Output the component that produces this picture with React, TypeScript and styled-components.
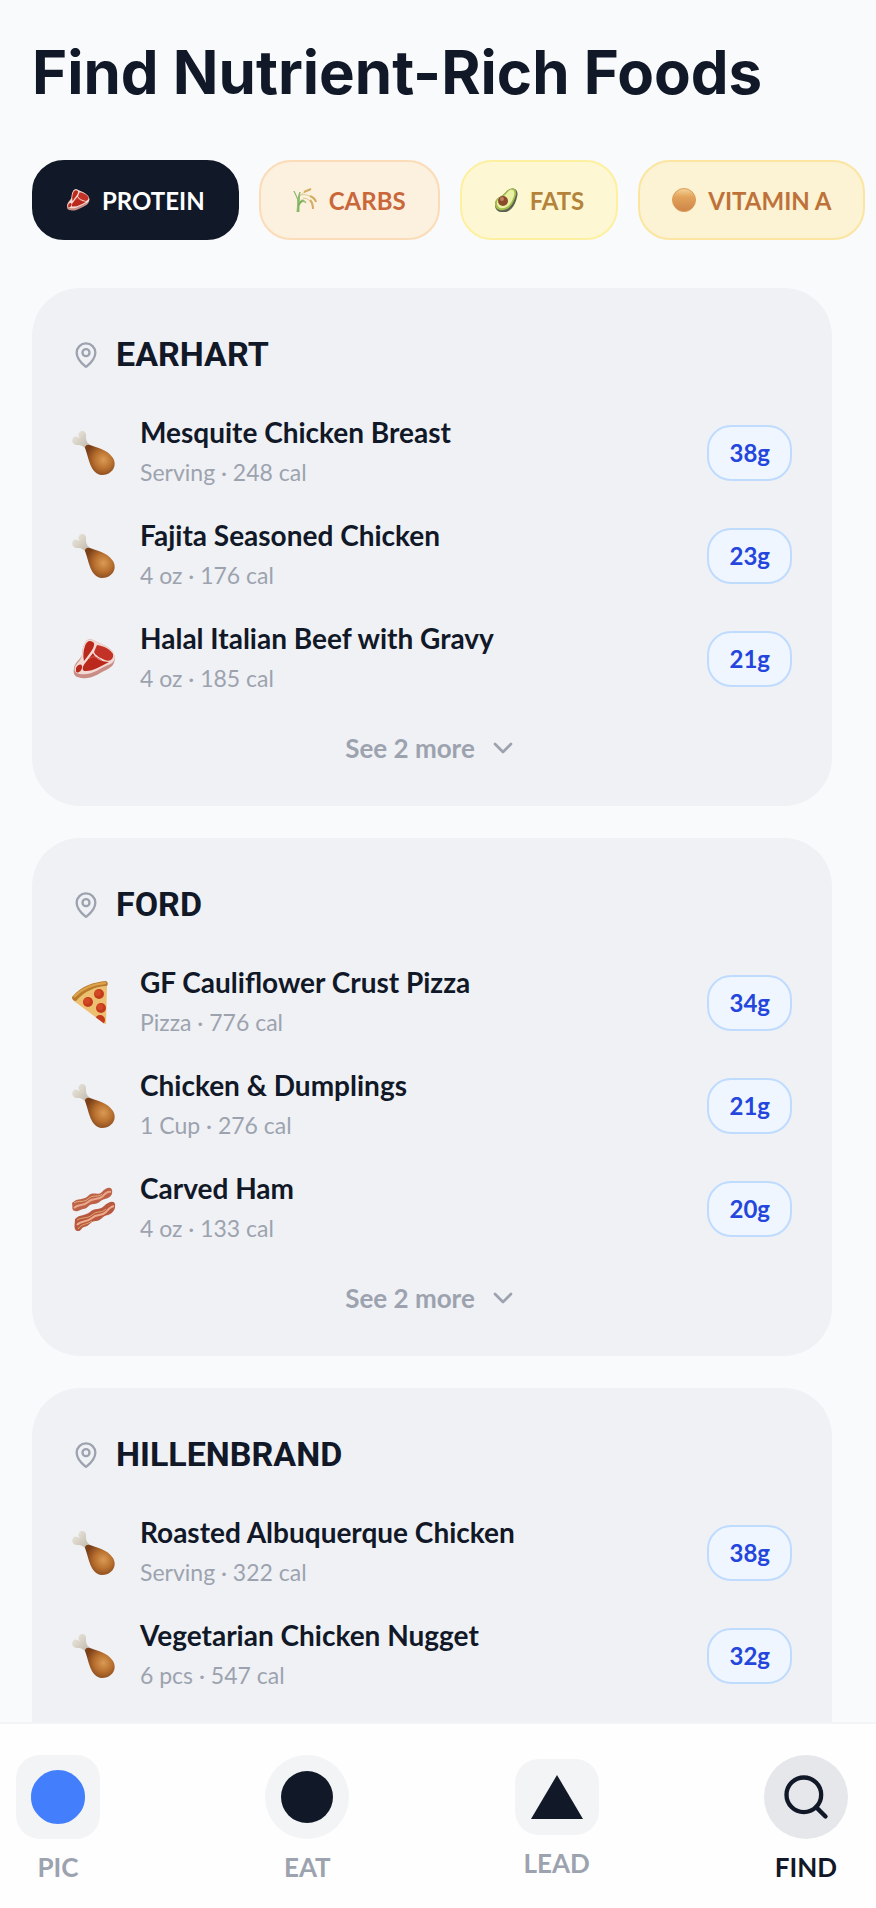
import React from 'react';
import styled, { createGlobalStyle, css } from 'styled-components';
import { ChevronDown, MapPin, Search } from 'lucide-react';

type FoodIcon = 'drumstick' | 'steak' | 'pizza' | 'bacon';
type NutrientTone = 'active' | 'orange' | 'yellow' | 'amber';
type NavShape = 'square' | 'circle' | 'wide';

interface Food {
  name: string;
  info: string;
  amount: string;
  icon: FoodIcon;
}

interface Hall {
  name: string;
  foods: Food[];
  hidden: number;
}

const halls: Hall[] = [
  {
    name: 'EARHART',
    hidden: 2,
    foods: [
      { name: 'Mesquite Chicken Breast', info: 'Serving · 248 cal', amount: '38g', icon: 'drumstick' },
      { name: 'Fajita Seasoned Chicken', info: '4 oz · 176 cal', amount: '23g', icon: 'drumstick' },
      { name: 'Halal Italian Beef with Gravy', info: '4 oz · 185 cal', amount: '21g', icon: 'steak' },
    ],
  },
  {
    name: 'FORD',
    hidden: 2,
    foods: [
      { name: 'GF Cauliflower Crust Pizza', info: 'Pizza · 776 cal', amount: '34g', icon: 'pizza' },
      { name: 'Chicken & Dumplings', info: '1 Cup · 276 cal', amount: '21g', icon: 'drumstick' },
      { name: 'Carved Ham', info: '4 oz · 133 cal', amount: '20g', icon: 'bacon' },
    ],
  },
  {
    name: 'HILLENBRAND',
    hidden: 0,
    foods: [
      { name: 'Roasted Albuquerque Chicken', info: 'Serving · 322 cal', amount: '38g', icon: 'drumstick' },
      { name: 'Vegetarian Chicken Nugget', info: '6 pcs · 547 cal', amount: '32g', icon: 'drumstick' },
    ],
  },
];

const Drumstick: React.FC = () => (
  <svg viewBox="0 0 44 44" aria-hidden="true">
    <defs>
      <radialGradient id="meat" cx="0.62" cy="0.5" r="0.6">
        <stop offset="0" stopColor="#d99a55" />
        <stop offset="0.5" stopColor="#b9702f" />
        <stop offset="1" stopColor="#7c4019" />
      </radialGradient>
      <linearGradient id="bone" x1="0" y1="0" x2="1" y2="1">
        <stop offset="0" stopColor="#efebe2" />
        <stop offset="1" stopColor="#bdb5a7" />
      </linearGradient>
    </defs>
    <path d="M7 2C9-2 14 0 14 4C14 8 14 11 18 14L14 18C10 14 8 14 5 14C1 14-1 10 1 7C3 4 5 6 8 7C6 5 6 4 7 2Z" fill="url(#bone)" />
    <path d="M13 16Q14 13 18 14C25 17 35 18 41 27C46 36 39 44 30 44C18 43 17 27 13 17Z" fill="url(#meat)" />
  </svg>
);

const Steak: React.FC = () => (
  <svg viewBox="0 0 44 44" aria-hidden="true">
    <path d="M12 8C14 2 18 1 23 4C28 7 35 8 40 14C45 20 43 29 36 32C29 35 20 43 9 41C2 40 1 37 2 31C3 25 8 23 10 18C11 14 10 12 12 8Z" fill="#c98d86" />
    <path d="M12 8C14 2 18 1 23 4C28 7 35 8 40 14C45 20 43 26 36 28C28 31 20 39 8 37C1 36 2 31 4 28C8 23 9 22 10 18C11 14 10 12 12 8Z" fill="#f2d9d4" />
    <path d="M13 9C15 3 19 3 22 6C23 11 17 17 12 24C11 20 11 14 13 9Z" fill="#bb291c" />
    <path d="M25 8C32 9 38 12 41 17C42 22 38 25 33 23C28 21 23 18 22 15Z" fill="#c23226" />
    <path d="M21 16C23 21 29 25 37 25C29 29 20 35 12 34C9 32 12 27 14 25Z" fill="#bb291c" />
    <path d="M4 31C7 26 11 27 10 31C9 36 3 37 4 33Z" fill="#b8291d" />
    <path d="M17 22C21 18 25 20 30 24" fill="none" stroke="#d9584b" strokeWidth="1" />
  </svg>
);

const Pizza: React.FC = () => (
  <svg viewBox="0 0 44 44" aria-hidden="true">
    <defs>
      <clipPath id="slice">
        <path d="M3 18Q16 6 35 5L34 43Q32 43 30 41L2 20Z" />
      </clipPath>
    </defs>
    <path d="M3 18Q16 6 35 5L34 43Q32 43 30 41L2 20Z" fill="#edc071" />
    <g clipPath="url(#slice)">
      <circle cx="27" cy="13" r="5" fill="#c43a1c" />
      <circle cx="16" cy="21" r="5" fill="#c43a1c" />
      <circle cx="29" cy="27" r="5" fill="#c43a1c" />
      <circle cx="28" cy="39" r="5" fill="#c43a1c" />
      <circle cx="26" cy="12" r="3" fill="#d34925" />
      <circle cx="15" cy="20" r="3" fill="#d34925" />
      <circle cx="28" cy="26" r="3" fill="#d34925" />
    </g>
    <path d="M0 16C9 5 22 1 34 0Q37 2 35 5C22 6 13 10 4 20Q0 20 0 16Z" fill="#b97a2a" />
    <path d="M2 16C11 6 22 3 34 2" fill="none" stroke="#dda34c" strokeWidth="2" />
  </svg>
);

const Bacon: React.FC = () => (
  <svg viewBox="0 0 44 44" aria-hidden="true">
    <path d="M0 16C6 10 11 14 16 9C20 4 26 9 30 5C33 1 39-1 40 3C41 8 38 11 33 12C28 13 27 17 22 17C16 17 16 22 11 22C7 23 6 25 3 24C-1 23 1 20 0 16Z" fill="#bd6248" />
    <path d="M2 21C7 16 11 20 16 15C21 10 26 14 31 9Q35 4 39 5" fill="none" stroke="#eba98c" strokeWidth="2" />
    <path d="M2 16C7 13 11 16 16 12C21 7 26 11 30 7" fill="none" stroke="#e0b07a" strokeWidth="1" />
    <path d="M3 32C8 27 13 29 18 25C23 20 27 24 32 19C36 15 42 13 43 17C44 23 40 27 36 28C30 29 29 34 24 34C18 34 18 39 12 40C9 41 9 45 5 44C1 42 3 37 3 32Z" fill="#b85840" />
    <path d="M5 38C9 33 14 36 20 31C25 26 29 30 34 25Q38 20 42 19" fill="none" stroke="#efac8d" strokeWidth="2" />
    <path d="M6 42C10 36 15 38 20 34M5 33C10 30 15 32 20 28C25 23 29 27 34 22" fill="none" stroke="#dfaa70" strokeWidth="1" />
  </svg>
);

const Wheat: React.FC = () => (
  <svg viewBox="0 0 24 24" aria-hidden="true">
    <path d="M4 24L5 12L1 3C3 8 5 10 5 14C5 9 6 6 7 4L6 15C8 11 11 11 13 15C10 12 8 14 6 18V24Z" fill="#78ae55" stroke="#8fbc70" strokeWidth="1" />
    <path d="M7 8C10 4 14 3 18 1M8 7C14 5 21 10 23 14M10 10Q18 10 20 20" fill="none" stroke="#e2c88f" strokeWidth="1" />
    <path d="M11 4L18 1M17 8Q22 10 23 14M17 12Q20 15 20 21" fill="none" stroke="#d4ad62" strokeWidth="2" />
  </svg>
);

const Avocado: React.FC = () => (
  <svg viewBox="0 0 24 24" aria-hidden="true">
    <path d="M16 1C21-1 25 3 23 9C22 14 19 22 12 24C6 25 1 23 1 17C1 9 8 9 11 5Q13 2 16 1Z" fill="#5b6350" />
    <path d="M16 1C20-1 23 2 22 7C20 13 17 21 10 22C5 23 1 21 1 16C1 9 8 9 11 5Q13 2 16 1Z" fill="#a5bd4d" />
    <path d="M16 2C20 1 21 4 20 8C18 14 15 19 10 20C6 21 3 19 3 15C3 10 9 10 12 6Q14 3 16 2Z" fill="#eaf0a6" />
    <circle cx="9" cy="13" r="5" fill="#8a4b2c" />
    <circle cx="8" cy="11" r="2" fill="#bd8060" />
  </svg>
);

const OrangeDot: React.FC = () => (
  <svg viewBox="0 0 24 24" aria-hidden="true">
    <defs>
      <linearGradient id="dot" x1="0" y1="0" x2="0" y2="1">
        <stop offset="0" stopColor="#f5d49b" />
        <stop offset="0.35" stopColor="#e3a45b" />
        <stop offset="1" stopColor="#cd8448" />
      </linearGradient>
    </defs>
    <circle cx="12" cy="12" r="11.5" fill="url(#dot)" stroke="#dc9c58" />
  </svg>
);

const foodIcons: Record<FoodIcon, React.FC> = {
  drumstick: Drumstick,
  steak: Steak,
  pizza: Pizza,
  bacon: Bacon,
};

const nutrients: { label: string; tone: NutrientTone; Icon: React.FC }[] = [
  { label: 'PROTEIN', tone: 'active', Icon: Steak },
  { label: 'CARBS', tone: 'orange', Icon: Wheat },
  { label: 'FATS', tone: 'yellow', Icon: Avocado },
  { label: 'VITAMIN A', tone: 'amber', Icon: OrangeDot },
];

const FoodItem: React.FC<{ food: Food }> = ({ food }) => {
  const Icon = foodIcons[food.icon];

  return (
    <FoodRow>
      <FoodPicture>
        <Icon />
      </FoodPicture>
      <FoodText>
        <FoodName>{food.name}</FoodName>
        <FoodInfo>{food.info}</FoodInfo>
      </FoodText>
      <Amount>{food.amount}</Amount>
    </FoodRow>
  );
};

const HallCard: React.FC<{ hall: Hall }> = ({ hall }) => (
  <Card>
    <CardHeader>
      <MapPin size={28} color="#9ca3af" />
      <HallName>{hall.name}</HallName>
    </CardHeader>

    <FoodList>
      {hall.foods.map((food) => (
        <FoodItem key={food.name} food={food} />
      ))}
    </FoodList>

    {hall.hidden > 0 && (
      <MoreButton type="button">
        {`See ${hall.hidden} more`}
        <ChevronDown size={32} />
      </MoreButton>
    )}
  </Card>
);

const App: React.FC = () => (
  <>
    <GlobalStyle />
    <Shell>
      <Content>
        <Title>Find Nutrient-Rich Foods</Title>

        <Nutrients>
          {nutrients.map(({ label, tone, Icon }) => (
            <NutrientButton key={label} type="button" tone={tone} aria-pressed={tone === 'active'}>
              <Icon />
              {label}
            </NutrientButton>
          ))}
        </Nutrients>

        <Halls>
          {halls.map((hall) => (
            <HallCard key={hall.name} hall={hall} />
          ))}
        </Halls>
      </Content>

      <NavBar>
        <NavLink href="#pic">
          <NavIcon shape="square">
            <svg width="54" height="54" viewBox="0 0 54 54" aria-hidden="true">
              <path d="M27 0C35 0 41 3 46 8C51 13 54 19 54 27C54 35 51 41 46 46C41 51 35 54 27 54C19 54 13 51 8 46C3 41 0 35 0 27C0 19 3 13 8 8C13 3 19 0 27 0Z" fill="#437ffd" />
            </svg>
          </NavIcon>
          PIC
        </NavLink>
        <NavLink href="#eat">
          <NavIcon shape="circle">
            <svg width="52" height="52" viewBox="0 0 52 52" aria-hidden="true">
              <circle cx="26" cy="26" r="26" fill="#111827" />
            </svg>
          </NavIcon>
          EAT
        </NavLink>
        <NavLink href="#lead">
          <NavIcon shape="wide">
            <svg width="52" height="44" viewBox="0 0 52 44" aria-hidden="true">
              <path d="M26 0L52 44H0Z" fill="#111827" />
            </svg>
          </NavIcon>
          LEAD
        </NavLink>
        <NavLink href="#find" $active aria-current="page">
          <NavIcon shape="circle" $active>
            <Search size={52} />
          </NavIcon>
          FIND
        </NavLink>
      </NavBar>
    </Shell>
  </>
);

export default App;

const GlobalStyle = createGlobalStyle`
  *, *::before, *::after { box-sizing: border-box; }

  body {
    margin: 0;
    background: #f9fafc;
    color: #111827;
    font-family: Lato, 'Open Sans', sans-serif;
  }

  button { font-family: inherit; cursor: pointer; }
`;

const Shell = styled.div`
  display: flex;
  flex-direction: column;
  height: 100vh;
`;

const Content = styled.main`
  flex: 1;
  min-height: 0;
  overflow-y: auto;
  scrollbar-width: none;
  padding: 32px 44px 32px 32px;
`;

const Title = styled.h1`
  margin: 0 0 48px;
  font-family: Inter, sans-serif;
  font-size: 60px;
  font-weight: 700;
  line-height: 80px;
`;

const Nutrients = styled.div`
  display: flex;
  gap: 20px;
  margin: 0 -44px 48px 0;
  overflow-x: auto;
  scrollbar-width: none;
`;

const tones = {
  active: css`
    background: #111827;
    border-color: #111827;
    color: #fff;
  `,
  orange: css`
    background: #fcf0df;
    border-color: #fbdcb8;
    color: #c9673a;
  `,
  yellow: css`
    background: #fdf8d3;
    border-color: #fdf0a0;
    color: #b4833b;
  `,
  amber: css`
    background: #fbf3d3;
    border-color: #fce5a0;
    color: #be7239;
  `,
};

const NutrientButton = styled.button<{ tone: NutrientTone }>`
  display: flex;
  flex-shrink: 0;
  align-items: center;
  gap: 12px;
  height: 80px;
  padding: 0 32px;
  border: 2px solid;
  border-radius: 32px;
  font-size: 24px;
  font-weight: 700;
  ${({ tone }) => tones[tone]}

  svg {
    width: 24px;
    height: 24px;
  }
`;

const Halls = styled.div`
  display: flex;
  flex-direction: column;
  gap: 32px;
`;

const Card = styled.section`
  padding: 40px;
  border-radius: 48px;
  background: #f0f1f5;

  &:last-child { padding-bottom: 120px; }
`;

const CardHeader = styled.header`
  display: flex;
  align-items: center;
  gap: 16px;
  margin-bottom: 32px;
`;

const HallName = styled.h2`
  margin: 0;
  font-family: Roboto, sans-serif;
  font-size: 34px;
  font-weight: 700;
  line-height: 53px;
`;

const FoodList = styled.ul`
  display: flex;
  flex-direction: column;
  gap: 24px;
  margin: 0;
  padding: 0;
  list-style: none;
`;

const FoodRow = styled.li`
  display: flex;
  align-items: center;
  gap: 24px;
`;

const FoodPicture = styled.span`
  display: flex;
  width: 44px;
  height: 44px;

  svg { width: 100%; }
`;

const FoodText = styled.div`
  flex: 1;
  min-width: 0;
`;

const FoodName = styled.h3`
  margin: 0;
  font-size: 28px;
  font-weight: 700;
  line-height: 39px;
`;

const FoodInfo = styled.p`
  margin: 0;
  color: #9ca3af;
  font-size: 23px;
  line-height: 40px;
`;

const Amount = styled.span`
  padding: 0 20px;
  border: 2px solid #bfdbfe;
  border-radius: 24px;
  background: #eff6ff;
  color: #2446dc;
  font-size: 24px;
  font-weight: 700;
  line-height: 52px;
`;

const MoreButton = styled.button`
  display: flex;
  align-items: center;
  justify-content: center;
  gap: 12px;
  width: 100%;
  height: 36px;
  margin-top: 32px;
  padding: 0;
  border: none;
  background: none;
  color: #9ca3af;
  font-size: 26px;
  font-weight: 700;
`;

const NavBar = styled.nav`
  display: flex;
  align-items: center;
  justify-content: space-between;
  height: 186px;
  padding: 10px 28px 0 16px;
  border-top: 2px solid #f3f4f6;
  background: #fefefe;
`;

const NavLink = styled.a<{ $active?: boolean }>`
  display: flex;
  flex-direction: column;
  align-items: center;
  gap: 8px;
  color: ${({ $active }) => ($active ? '#111827' : '#9ca3af')};
  font-size: 26px;
  font-weight: 700;
  line-height: 40px;
  text-decoration: none;
`;

const NavIcon = styled.span<{ shape: NavShape; $active?: boolean }>`
  display: flex;
  align-items: center;
  justify-content: center;
  width: 84px;
  height: ${({ shape }) => (shape === 'wide' ? '76px' : '84px')};
  border-radius: ${({ shape }) => (shape === 'circle' ? '50%' : '24px')};
  background: ${({ $active }) => ($active ? '#e5e7eb' : '#f3f4f6')};
  color: #111827;
`;
